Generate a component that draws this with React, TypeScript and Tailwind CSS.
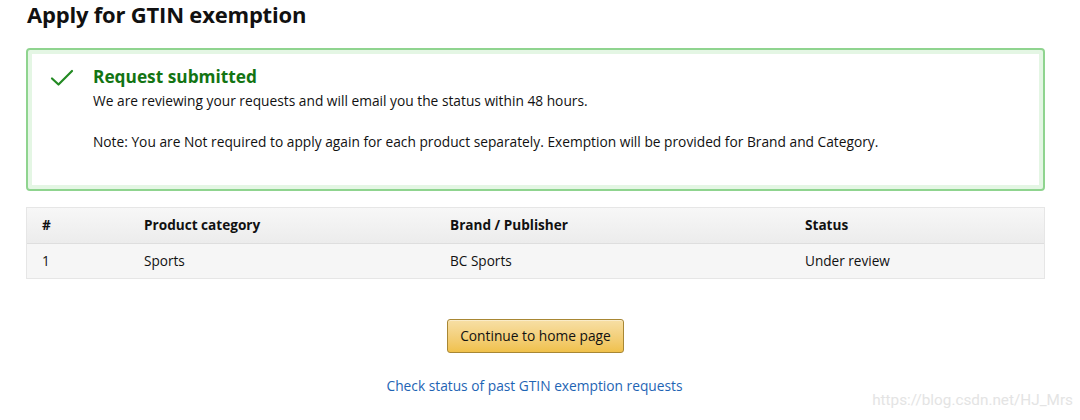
import React from 'react';

const rows = [{ n: '1', category: 'Sports', brand: 'BC Sports', status: 'Under review' }];

export default function App() {
  return (
    <div
      className="relative w-[1080px] h-[420px] bg-white text-[#111] overflow-hidden"
      style={{ fontFamily: '"Open Sans", "Liberation Sans", sans-serif' }}
    >
      <div className="pl-[26px] pr-[35px]">
        <h1 className="text-[22px] leading-[28px] font-bold tracking-[-0.2px] pl-[1px]">Apply for GTIN exemption</h1>

        {/* alert */}
        <div className="mt-[20px] h-[143px] rounded-[4px] border-2 border-[#8fd48f] shadow-[inset_0_0_0_4px_#e4f6e4] flex pt-[16px]">
          <div className="w-[65px] pl-[22px] pt-[2px]">
            <svg width="24" height="20" viewBox="0 0 24 20" fill="none">
              <path d="M2 10.5 L8.5 16.5 L22 3" stroke="#238a23" strokeWidth="2.2" strokeLinecap="round" strokeLinejoin="round" />
            </svg>
          </div>
          <div>
            <div className="text-[17.3px] leading-[22px] font-bold text-[#137413]">Request submitted</div>
            <p className="mt-[3px] text-[13.75px] leading-[20px]">We are reviewing your requests and will email you the status within 48 hours.</p>
            <p className="mt-[21px] text-[13.75px] leading-[20px]">
              Note: You are Not required to apply again for each product separately. Exemption will be provided for Brand and Category.
            </p>
          </div>
        </div>

        {/* table */}
        <div className="mt-[16px] border border-[#e6e6e6] text-[13.6px]">
          <div className="flex h-[36px] items-center bg-gradient-to-b from-[#f7f7f7] to-[#ececec] border-b border-[#dedede] font-bold">
            <div className="w-[117px] pl-[15px]">#</div>
            <div className="w-[306px]">Product category</div>
            <div className="w-[355px]">Brand / Publisher</div>
            <div>Status</div>
          </div>
          {rows.map((r) => (
            <div key={r.n} className="flex h-[34px] items-center bg-[#f6f6f6]">
              <div className="w-[117px] pl-[15px]">{r.n}</div>
              <div className="w-[306px]">{r.category}</div>
              <div className="w-[355px]">{r.brand}</div>
              <div>{r.status}</div>
            </div>
          ))}
        </div>

        <div className="flex flex-col items-center mt-[40px]">
          <button className="h-[34px] px-[12px] rounded-[3px] border border-[#a88734] bg-gradient-to-b from-[#f7dfa5] to-[#f0c14b] text-[13.75px] text-[#111] shadow-[inset_0_1px_0_rgba(255,255,255,0.4)]">
            Continue to home page
          </button>
          <a className="mt-[23px] text-[13.75px] text-[#1e64b4] -ml-[2px]" href="#">Check status of past GTIN exemption requests</a>
        </div>
      </div>

      <div
        className="absolute right-[7px] bottom-[8px] text-[15.3px] text-[#e4e4e4]"
        style={{ fontFamily: 'Roboto, "Liberation Sans", sans-serif' }}
      >
        https://blog.csdn.net/HJ_Mrs
      </div>
    </div>
  );
}
